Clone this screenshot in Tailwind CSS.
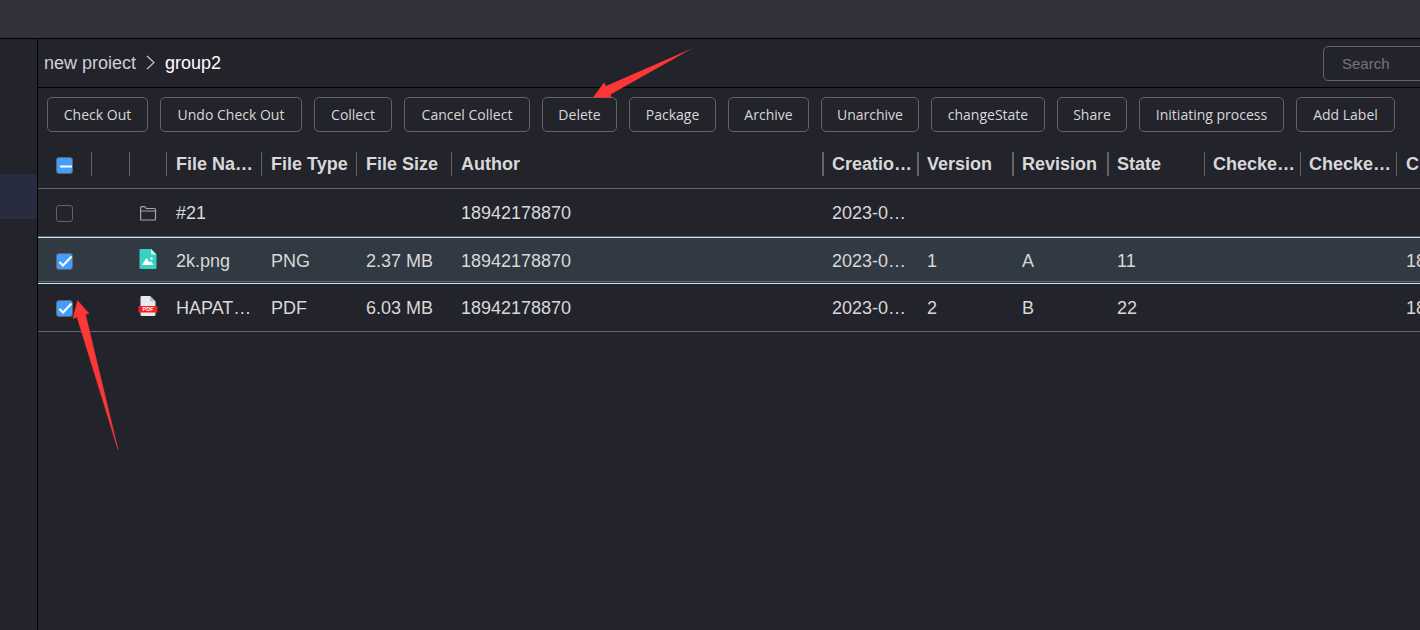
<!DOCTYPE html>
<html lang="en">
<head>
<meta charset="utf-8">
<title>group2</title>
<script src="https://cdn.jsdelivr.net/npm/@tailwindcss/browser@4"></script>
</head>
<body class="relative flex min-h-screen flex-col overflow-hidden bg-[#23232c] font-['Liberation_Sans',Arial,sans-serif] text-lg text-[#d8d8d8]">
<header class="h-[39px] shrink-0 border-b border-black bg-[#31313a]"></header>
<div class="flex flex-1">
  <aside class="w-[38px] shrink-0 border-r border-black pt-[135px]">
    <div class="h-[45px] bg-[#272c40]"></div>
  </aside>
  <main class="min-w-0 flex-1 overflow-hidden">
    <div class="flex h-[49px] items-center justify-between border-b border-black pl-1.5">
      <nav aria-label="Breadcrumb" class="flex items-center gap-2.5">
        <a href="#" class="text-[#d0d0d0]">new proiect</a>
        <svg class="h-4 w-[9px]" viewBox="0 0 9 16" fill="none" stroke="#c4c4c4" stroke-width="1.2" aria-hidden="true"><path d="M1 1L8 7.500L1 14"/></svg>
        <a href="#" aria-current="page" class="text-white">group2</a>
      </nav>
      <input type="text" aria-label="Search" placeholder="Search" class="-mr-24 h-[35px] w-[193px] rounded-[5px] border border-[#636363] bg-transparent pl-[18px] text-[15px] placeholder:text-[#757575]">
    </div>
    <div class="flex gap-[12px] py-[9px] pl-[9px] font-['Open_Sans','Noto_Sans',sans-serif] text-sm whitespace-nowrap">
      <button class="h-[35px] w-[101px] shrink-0 rounded-[5px] border border-[#636363]">Check Out</button>
      <button class="h-[35px] w-[142px] shrink-0 rounded-[5px] border border-[#636363]">Undo Check Out</button>
      <button class="h-[35px] w-[78px] shrink-0 rounded-[5px] border border-[#636363]">Collect</button>
      <button class="h-[35px] w-[126px] shrink-0 rounded-[5px] border border-[#636363]">Cancel Collect</button>
      <button class="h-[35px] w-[75px] shrink-0 rounded-[5px] border border-[#636363]">Delete</button>
      <button class="h-[35px] w-[87px] shrink-0 rounded-[5px] border border-[#636363]">Package</button>
      <button class="h-[35px] w-[81px] shrink-0 rounded-[5px] border border-[#636363]">Archive</button>
      <button class="h-[35px] w-[98px] shrink-0 rounded-[5px] border border-[#636363]">Unarchive</button>
      <button class="h-[35px] w-[114px] shrink-0 rounded-[5px] border border-[#636363]">changeState</button>
      <button class="h-[35px] w-[70px] shrink-0 rounded-[5px] border border-[#636363]">Share</button>
      <button class="h-[35px] w-[145px] shrink-0 rounded-[5px] border border-[#636363]">Initiating process</button>
      <button class="h-[35px] w-[99px] shrink-0 rounded-[5px] border border-[#636363]">Add Label</button>
    </div>
    <table class="w-[calc(100%+73px)] table-fixed border-separate border-spacing-0 whitespace-nowrap [&_td]:p-0 [&_th]:p-0 [&_th]:text-left [&_td:nth-child(n+3)]:pl-[9px]">
      <colgroup>
        <col class="w-[54px]"><col class="w-[38px]"><col class="w-[37px]"><col class="w-[95px]"><col class="w-[95px]"><col class="w-[95px]"><col>
        <col class="w-[95px]"><col class="w-[95px]"><col class="w-[95px]"><col class="w-[96px]"><col class="w-[96px]"><col class="w-[96px]"><col class="w-[96px]">
      </colgroup>
      <thead class="[&_th]:h-[48px] [&_th]:border-b [&_th]:border-[#636363] [&_th>div]:mb-0.5 [&_th>div]:h-6 [&_th>div]:border-[#636363] [&_th>div]:leading-6">
        <tr>
          <th><div class="flex items-end border-r pb-0.5 pl-[18px]"><label class="relative block size-[17px]"><input type="checkbox" checked aria-label="Select all" class="block size-full appearance-none rounded-[3px] border border-[#636363] bg-[#409eff]"><svg class="pointer-events-none absolute inset-0" viewBox="0 0 17 17" aria-hidden="true"><path d="M4 9.500H16" stroke="#fff" stroke-width="2"/></svg></label></div></th>
          <th><div class="border-r"></div></th>
          <th><div class="border-r"></div></th>
          <th><div class="border-r pl-[9px]">File Na…</div></th>
          <th><div class="border-r pl-[9px]">File Type</div></th>
          <th><div class="border-r pl-[9px]">File Size</div></th>
          <th><div class="border-r-2 pl-[9px]">Author</div></th>
          <th><div class="border-r-2 pl-2">Creatio…</div></th>
          <th><div class="border-r-2 pl-2">Version</div></th>
          <th><div class="border-r-2 pl-2">Revision</div></th>
          <th><div class="border-r pl-2">State</div></th>
          <th><div class="border-r pl-2">Checke…</div></th>
          <th><div class="border-r pl-2">Checke…</div></th>
          <th><div class="pl-[9px]">Checke…</div></th>
        </tr>
      </thead>
      <tbody>
        <tr class="[&_td]:h-[48px] [&_td]:border-b [&_td]:border-[#636363]">
          <td><label class="ml-[18px] mt-0.5 block size-[17px]"><input type="checkbox" aria-label="Select #21" class="block size-full appearance-none rounded-[3px] border border-[#636363]"></label></td>
          <td></td>
          <td><svg class="h-[20px] w-[18px]" viewBox="0 0 18 20" fill="none" stroke="#a5a5a5" stroke-width="1.2" stroke-linejoin="round" aria-hidden="true"><path d="M1.600 16V4.600Q1.600 3.600 2.600 3.600H5.800L7.300 5.500H15.500Q16.500 5.500 16.500 6.500V16Q16.500 17 15.500 17H2.600Q1.600 17 1.600 16ZM2 8H16.500"/></svg></td>
          <td>#21</td><td></td><td></td><td>18942178870</td>
          <td class="pl-2!">2023-0…</td><td></td><td></td><td></td><td></td><td></td><td></td>
        </tr>
        <tr class="[&_td]:h-[47px] [&_td]:border-y [&_td]:border-[#b7e4ff] [&_td]:bg-[#313942] [&_td]:shadow-[inset_0_-1px_0_#313942,inset_0_-2px_0_#636363]">
          <td><label class="relative mt-0.5 ml-[18px] block size-[17px]"><input type="checkbox" checked aria-label="Select 2k.png" class="block size-full appearance-none rounded-[3px] border border-[#636363] bg-[#409eff]"><svg class="pointer-events-none absolute inset-0" viewBox="0 0 17 17" fill="none" aria-hidden="true"><path d="M3.500 9L7 12.500L15.500 3.500" stroke="#fff" stroke-width="2"/></svg></label></td>
          <td></td>
          <td><svg class="mb-1 h-[20px] w-[18px]" viewBox="0 0 18 20" aria-hidden="true"><path d="M1.500 0H12L17.500 5.500V18.500Q17.500 20 16 20H2Q.5 20 .5 18.500V1.500Q.5 0 1.500 0Z" fill="#38d2c5"/><path d="M12 0L17.500 5.500H13Q12 5.500 12 4.500Z" fill="#c6f5f1"/><path d="M3 16L7.500 9L10.500 13.500L12 12L14.500 16Z" fill="#fff"/><circle cx="12.500" cy="9.500" r="1.200" fill="#fff"/></svg></td>
          <td>2k.png</td><td>PNG</td><td>2.37 MB</td><td>18942178870</td>
          <td class="pl-2!">2023-0…</td><td class="pl-2!">1</td><td class="pl-2!">A</td><td class="pl-2!">11</td><td></td><td></td><td>18942178870</td>
        </tr>
        <tr class="[&_td]:h-[48px] [&_td]:border-b [&_td]:border-[#636363]">
          <td><label class="relative mt-0.5 ml-[18px] block size-[17px]"><input type="checkbox" checked aria-label="Select HAPAT…" class="block size-full appearance-none rounded-[3px] border border-[#636363] bg-[#409eff]"><svg class="pointer-events-none absolute inset-0" viewBox="0 0 17 17" fill="none" aria-hidden="true"><path d="M3.500 9L7 12.500L15.500 3.500" stroke="#fff" stroke-width="2"/></svg></label></td>
          <td></td>
          <td><svg class="mb-1 h-[20px] w-[18px] overflow-visible" viewBox="0 0 18 20" aria-hidden="true"><path d="M2.500 0H11L16.500 5.500V18.500Q16.500 20 15 20H3Q1.500 20 1.500 18.500V1Q1.500 0 2.500 0Z" fill="#e8eaee"/><path d="M11 0L16.500 5.500H12Q11 5.500 11 4.500Z" fill="#b9c0cb"/><rect x="-.5" y="10" width="19" height="6.500" rx="1" fill="#fa1e1e"/><text x="9" y="15.300" text-anchor="middle" font-size="5.500" font-weight="bold" fill="#fff">PDF</text></svg></td>
          <td>HAPAT…</td><td>PDF</td><td>6.03 MB</td><td>18942178870</td>
          <td class="pl-2!">2023-0…</td><td class="pl-2!">2</td><td class="pl-2!">B</td><td class="pl-2!">22</td><td></td><td></td><td>18942178870</td>
        </tr>
      </tbody>
    </table>
  </main>
</div>
<svg class="pointer-events-none absolute top-[48px] left-[593px] h-[50px] w-[100px]" viewBox="0 0 100 50" fill="#fd3636" aria-hidden="true"><path d="M100 0L13 38L11 34.500L0 49.500H18.500L17.500 46.500Z"/></svg>
<svg class="pointer-events-none absolute top-[300px] left-[72px] h-[150px] w-[48px]" viewBox="0 0 48 150" fill="#fd3636" aria-hidden="true"><path d="M46 149.500L13.500 14.500L17 13.500L5.500 .5L1 18.500L5 17Z" stroke="#fd3636" stroke-width=".5"/></svg>
</body>
</html>
